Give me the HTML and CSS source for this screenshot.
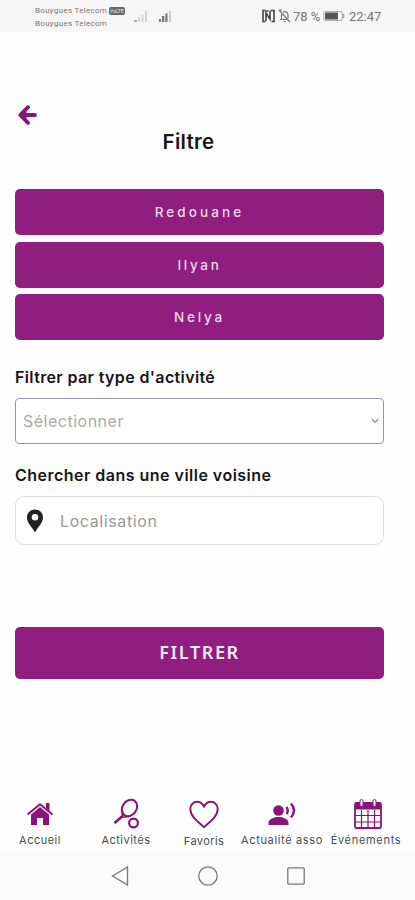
FILE: index.html
```html
<!DOCTYPE html>
<html lang="fr">
<head>
<meta charset="utf-8">
<title>Filtre</title>
<link rel="stylesheet" href="styles.css">
</head>
<body>
<header class="status">
  <div class="carrier">
    <div class="carrier-row"><span class="carrier-name">Bouygues Telecom</span><span class="volte">VoLTE</span></div>
    <div class="carrier-row"><span class="carrier-name">Bouygues Telecom</span></div>
  </div>
  <svg class="signals" width="40" height="14" viewBox="0 0 40 14">
    <g fill="#d3d3d3"><path d="M0 11h3v2H0z" fill="#aaa"/><path d="M4 8h2v5H4zM7.500 6h2v7h-2zM11 2h2v11h-2z"/></g>
    <g fill="#777"><path d="M25 10h2v3h-2zM28 7h2.300v6H28zM31.300 4.500h2.200V13h-2.200z"/><path d="M35 2h2v11h-2z" fill="#ccc"/></g>
  </svg>
  <div class="status-right">
    <svg width="13" height="14" viewBox="0 0 13 14" fill="none" stroke="#444" stroke-width="1.600"><path d="M3.500 1.500H1v11h2.500M4 12V4l4 6V2M8.500 1.500H12v11H9.500M4 2h2.500"/></svg>
    <svg class="bell" width="13" height="14" viewBox="0 0 13 14" fill="none" stroke="#777" stroke-width="1.200"><path d="M1 1l11 12M2 10.500h8M3.500 10V5M5 3.200C8 1.500 10 4 10 6v3M5.500 12.500h2.500M1 1h3"/></svg>
    <span class="percent">78 %</span>
    <svg class="battery" width="23" height="12" viewBox="0 0 23 12"><rect x=".8" y="1.500" width="18.500" height="9" rx="1.500" fill="none" stroke="#aaa"/><rect x="2" y="2.500" width="13" height="7" fill="#555"/><path d="M20.500 4v4" stroke="#999" stroke-width="1.500"/></svg>
    <span class="clock">22:47</span>
  </div>
</header>
<main class="page">
  <svg class="back" width="20" height="22" viewBox="0 0 20 22" fill="none" stroke="#8a1379" stroke-width="3.800" stroke-linecap="round" stroke-linejoin="round"><path d="M10 3.200L2.300 11l7.700 7.800M3.500 11H17" /><path d="M8 6.500v9L4 11z" fill="#8a1379" stroke-width="1"/></svg>
  <h1 class="title">Filtre</h1>
  <div class="people">
    <button class="person redouane">Redouane</button>
    <button class="person ilyan">Ilyan</button>
    <button class="person nelya">Nelya</button>
  </div>
  <div class="label"><span class="label-type">Filtrer par type d'activité</span></div>
  <div class="select"><span class="select-text">Sélectionner</span>
    <svg width="8" height="6" viewBox="0 0 8 6" fill="none" stroke="#888" stroke-width="1.300"><path d="M.8 1.200L4 4.200l3.200-3"/></svg>
  </div>
  <div class="label"><span class="label-city">Chercher dans une ville voisine</span></div>
  <div class="location">
    <svg width="16" height="24" viewBox="0 0 16 24"><path fill="#222" fill-rule="evenodd" d="M8 .5C3.500.5 0 4 0 8.500 0 14 5 18 8 23.500 11 18 16 14 16 8.500 16 4 12.500.5 8 .5zM8 5a3.300 3.300 0 1 1 0 6.600A3.300 3.300 0 0 1 8 5z"/></svg>
    <span class="location-text">Localisation</span>
  </div>
  <button class="submit">FILTRER</button>
</main>
<nav class="tabs">
  <div class="tab">
    <svg class="tab-icon" width="28" height="32" viewBox="0 0 28 32"><g fill="#8a1379"><path d="M14 9l9 7.500V27h-6v-7h-6v7H5V16.500z"/><path d="M20 5h3.500v8L20 10z"/></g><path d="M1.500 16.500L14 6.200l12.500 10.300" fill="none" stroke="#8a1379" stroke-width="2"/></svg>
    <span class="tab-label accueil">Accueil</span>
  </div>
  <div class="tab">
    <svg class="tab-icon" width="28" height="32" viewBox="0 0 28 32" fill="none" stroke="#8a1379"><ellipse cx="17.500" cy="10" rx="7" ry="8.800" transform="rotate(36 17.500 10)" stroke-width="2.100"/><path d="M10.500 13.500l-.5 6M17 18.500l-7 .8" stroke-width="1.600"/><path d="M10 18.500L2.500 25" stroke-width="2.600"/><circle cx="21.500" cy="25" r="4.400" stroke-width="2.200"/></svg>
    <span class="tab-label activites">Activités</span>
  </div>
  <div class="tab tab-low">
    <svg class="tab-icon" width="32" height="32" viewBox="0 0 32 32" fill="none" stroke="#8a1379" stroke-width="1.900"><path d="M16 29C9 23 2.300 18 2.300 11c0-4 3-7.300 6.700-7.300 3 0 5.500 1.800 7 4.800 1.500-3 4-4.800 7-4.800 3.700 0 6.700 3.300 6.700 7.300 0 7-6.700 12-13.700 18z"/></svg>
    <span class="tab-label favoris">Favoris</span>
  </div>
  <div class="tab">
    <svg class="tab-icon" width="28" height="32" viewBox="0 0 28 32"><g fill="#8a1379"><circle cx="10.500" cy="12.500" r="5.300"/><path d="M.5 27v-2.500c0-3.500 6-5.500 10-5.500s10 2 10 5.500V27z"/></g><path d="M18.500 9q2.500 3.500 0 7M23 5.500q6 7 0 14" fill="none" stroke="#8a1379" stroke-width="2.400"/></svg>
    <span class="tab-label actualite">Actualité asso</span>
  </div>
  <div class="tab">
    <svg class="tab-icon calendar" width="30" height="34" viewBox="0 0 30 34"><rect x="2" y="5" width="26" height="25" rx="1.500" fill="#fff" stroke="#8a1379" stroke-width="1.800"/><path d="M2 4.500h26v7H2z" fill="#8a1379"/><path d="M8.500 12v18M15 12v18M21.500 12v18M2 17.500h26M2 24h26" stroke="#8a1379" stroke-width="1.200"/><rect x="7" y="1.500" width="3" height="7" rx="1.500" fill="#fff" stroke="#8a1379"/><rect x="20" y="1.500" width="3" height="7" rx="1.500" fill="#fff" stroke="#8a1379"/></svg>
    <span class="tab-label evenements">Événements</span>
  </div>
</nav>
<footer class="system">
  <svg width="18" height="20" viewBox="0 0 18 20"><path d="M16.500 1v18L1.500 10z"/></svg>
  <svg width="20" height="20" viewBox="0 0 20 20"><circle cx="10" cy="10" r="9.200"/></svg>
  <svg width="18" height="20" viewBox="0 0 18 20"><rect x=".8" y="1.800" width="16.400" height="16.400" rx="1"/></svg>
</footer>
</body>
</html>
```
FILE: styles.css
```css
* { box-sizing: border-box; }
body {
  margin: 0;
  width: 415px;
  height: 900px;
  overflow: hidden;
  display: flex;
  flex-direction: column;
  background: #fefefe;
  color: #161616;
  font-family: Inter, "Liberation Sans", sans-serif;
}
svg { display: block; flex: none; }
button { border: 0; margin: 0; padding: 0; font-family: inherit; }
span { white-space: nowrap; }

.status {
  height: 32px;
  flex: none;
  display: flex;
  background: #f6f6f6;
  padding-left: 35px;
  color: #777;
  font-family: Roboto, sans-serif;
}
.carrier { width: 99px; padding-top: 4px; }
.carrier-row { display: flex; align-items: center; height: 13px; font-size: 8px; letter-spacing: .3px; }
.carrier-name { width: 74px; }
.volte {
  width: 16px; height: 8px; border-radius: 2px;
  background: #666; color: #eee;
  font-size: 5px; line-height: 8px; letter-spacing: 0; text-align: center;
}
.signals { margin-top: 9px; }
.status-right { display: flex; align-items: center; margin-left: 88px; font-size: 13px; }
.bell { margin-left: 3px; }
.percent { width: 29px; margin-left: 2px; }
.battery { margin-left: 1px; }
.clock { margin-left: 3px; }

.page { height: 757px; flex: none; padding: 72px 31px 0 15px; }
.back { margin-left: 3px; }
.title { margin: 3px 0 0; padding-right: 22px; height: 26px; line-height: 26px; font-size: 20.500px; font-weight: 600; letter-spacing: .3px; text-align: center; }
.people { margin-top: 34px; display: flex; flex-direction: column; gap: 6.500px; }
.person { height: 46px; border-radius: 5px; background: #8f1e7f; color: #f2d9ee; font-size: 13.500px; font-weight: 500; }
.redouane { letter-spacing: 3.100px; }
.ilyan { letter-spacing: 2.700px; }
.nelya { letter-spacing: 2.800px; }
.label { display: flex; align-items: center; font-size: 16px; font-weight: 600; height: 24px; }
.label-type { letter-spacing: .37px; }
.label-city { letter-spacing: .48px; }
.people + .label { margin-top: 25px; }
.select { margin-top: 9px; height: 46px; display: flex; align-items: center; justify-content: space-between; padding: 0 4px 0 7px; border: 1px solid #9693ae; border-radius: 4px; background: #fff; font-size: 16px; letter-spacing: .5px; color: #aaa; }
.select + .label { margin-top: 19px; }
.location { margin-top: 9px; height: 49px; display: flex; align-items: center; padding-left: 11px; border: 1px solid #dedede; border-radius: 9px; background: #fff; font-size: 16px; letter-spacing: .6px; color: #999; }
.location-text { margin-left: 17px; }
.submit { display: block; width: 100%; height: 52px; margin-top: 82px; padding-bottom: 2px; border-radius: 5px; background: #8f1e7f; color: #fbeaf8; font-family: "Noto Sans", sans-serif; font-size: 18px; font-weight: 600; letter-spacing: 1.600px; }

.tabs { height: 64px; flex: none; display: grid; grid-template-columns: 80px 92px 64px 92px 76px; padding-top: 9px; }
.tab { display: flex; flex-direction: column; align-items: center; }
.tab-label { margin-top: 2px; font-size: 11px; line-height: 16px; color: #4b4b4b; }
.tab-low .tab-label { margin-top: 3px; }
.accueil, .activites { letter-spacing: .5px; }
.favoris { letter-spacing: .4px; }
.actualite { letter-spacing: .65px; }
.evenements { letter-spacing: .7px; }
.calendar { margin-bottom: -2px; margin-left: 4px; }
.system { height: 47px; flex: none; display: flex; align-items: center; justify-content: center; gap: 69px; padding-bottom: 1px; background: #fafafa; }
.system svg { fill: none; stroke: #777; stroke-width: 1.300; }
```
